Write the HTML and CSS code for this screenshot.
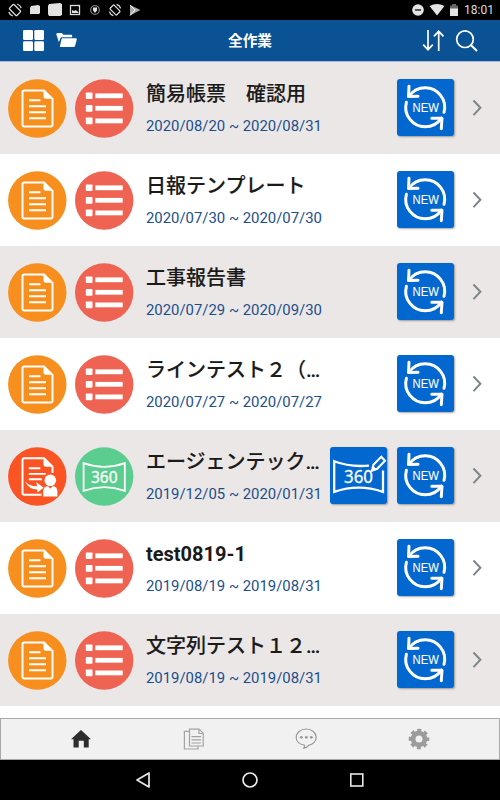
FILE: index.html
```html
<!DOCTYPE html>
<html lang="ja">
	<head>
		<meta charset="UTF-8">
		<title>全作業</title>
		<link rel="stylesheet" href="styles.css">
	</head>
	<body>
		<!-- icons shared by the rows -->
		<svg class="defs">
			<symbol id="doc" viewBox="0 0 59 59">
				<circle cx="29.3" cy="29.5" r="29.2" fill="#f78f1e"/>
				<path d="M36 11.5H16.2q-1.7 0-1.7 1.7v32.6q0 1.7 1.7 1.7h26.6q1.7 0 1.7-1.7V19.8Z" fill="none" stroke="#fff" stroke-width="2"/>
				<path d="M35.5 10.7v6.5q0 2.5 2.5 2.5h7.4Z" fill="#fff"/>
				<path d="M21 21.3h11.5M21 27.3h17M21 33.3h17M21 39.3h17" stroke="#fff" stroke-width="2"/>
			</symbol>
			<symbol id="list" viewBox="0 0 59 59">
				<circle cx="29.2" cy="29.5" r="29.2" fill="#ee6352"/>
				<g fill="#fff">
					<rect x="10.8" y="13.4" width="6.7" height="6.7" rx=".8"/>
					<rect x="10.8" y="26" width="6.7" height="6.7" rx=".8"/>
					<rect x="10.8" y="38.5" width="6.7" height="6.7" rx=".8"/>
					<rect x="20.3" y="14.4" width="27.4" height="4.8"/>
					<rect x="20.3" y="26.9" width="27.4" height="4.8"/>
					<rect x="20.3" y="39.5" width="27.4" height="4.8"/>
				</g>
			</symbol>
			<symbol id="send" viewBox="0 0 59 59">
				<circle cx="29.3" cy="29.5" r="29.2" fill="#fa5424"/>
				<path d="M33.5 47.7H16.2q-1.7 0-1.7-1.7V13q0-1.7 1.7-1.7H36l8.5 8.4V26" fill="none" stroke="#fff" stroke-width="2"/>
				<path d="M35.5 10.8v6.5q0 2.5 2.5 2.5h7.2Z" fill="#fff"/>
				<path d="M20.8 21.3h11.5M20.8 26.9h17M20.8 32.3h13" stroke="#fff" stroke-width="1.9"/>
				<path d="M17 34.5q5.5 5.3 12 4.7l-.6-4 7.2 5.5-6.2 4.8-.2-3Q21 42.5 17 34.5Z" fill="#fff"/>
				<circle cx="42.3" cy="33.3" r="5.8" fill="#fff"/>
				<path d="M35.2 49.5v-5q0-5.2 5-5.2l2.1 2.4 2.1-2.4q5 0 5 5.2v5Z" fill="#fff"/>
			</symbol>
			<symbol id="pano" viewBox="0 0 59 59">
				<circle cx="29.2" cy="29.5" r="29.2" fill="#5acd8f"/>
				<path d="M8.6 16.2q20.6 7.4 41.2 0v27.6q-20.6-7.2-41.2 0Z" fill="none" stroke="#fff" stroke-width="1.8"/>
				<text class="num" x="16" y="35.8" font-size="16.2" textLength="26.6" lengthAdjust="spacingAndGlyphs">360</text>
			</symbol>
			<symbol id="new" viewBox="0 0 57 57">
				<g fill="none" stroke="#fff" stroke-width="3" stroke-linecap="round" stroke-linejoin="round">
					<path d="M12.1 17.3A19.5 19.5 0 0 1 28.2 8.8A19.5 19.5 0 0 1 47 33.3"/>
					<path d="M9.4 23.3A19.5 19.5 0 0 0 28.2 47.8A19.5 19.5 0 0 0 44.4 39.2"/>
					<path d="M12 7.3l-.5 10.2 9.5-.2M34.8 39.2H45l-.7 10.5"/>
				</g>
				<text class="new-text" x="15.6" y="33.2" font-size="12.4" textLength="26.2" lengthAdjust="spacingAndGlyphs">NEW</text>
			</symbol>
			<symbol id="pano-edit" viewBox="0 0 57 57">
				<path d="M39 18.6Q20 20.4 4.2 14.3v30.6q24.4-8.4 48.8 0V23.5" fill="none" stroke="#fff" stroke-width="2.3"/>
				<text class="num" x="14" y="36.2" font-size="18.2" textLength="29" lengthAdjust="spacingAndGlyphs">360</text>
				<path d="M42 23.7l1.4-5.9 7.9-8 3.7 3.9-7.8 8.1Z" fill="none" stroke="#fff" stroke-width="2.1"/>
				<path d="M41.2 24.5l1.6-6 4.4 4.2Z" fill="#fff"/>
			</symbol>
			<symbol id="arrow" viewBox="0 0 10 18">
				<path d="M1.5 1.5L8.4 8.8l-6.9 7.3" fill="none" stroke="#7b8789" stroke-width="2"/>
			</symbol>
		</svg>

		<div class="status">
			<svg class="status-left" width="150" height="20">
				<g fill="none" stroke="#ddd" stroke-width="1.3">
					<rect x="11.8" y="4.8" width="6.4" height="10.4" rx="1" transform="rotate(-45 15 10)"/>
					<path d="M8.8 12a6.5 6.5 0 0 0 4 4M21.2 8a6.5 6.5 0 0 0-4-4"/>
					<rect x="70.5" y="5.5" width="9" height="9"/>
					<circle cx="95" cy="10" r="4.3" stroke="#777"/>
					<rect x="112.2" y="5.3" width="5.6" height="9.4" rx="1" transform="rotate(-45 115 10)"/>
					<path d="M109.4 11.6a5.8 5.8 0 0 0 4 4M120.6 8.4a5.8 5.8 0 0 0-4-4"/>
				</g>
				<g fill="#e2e2e2">
					<path d="M31 6l7-1 2 1v7l-1 1h-9V8Z"/>
					<path d="M49 4l11-1 2 1v11l-2 1H49l-1-2V6Z"/>
					<path d="M72 13v-3l2 1 2-1 3 3ZM93 7.5h4v3l-2 2.5-2-2.5Z"/>
					<path d="M130 5l10.5 5-10.5 5.5Z" opacity=".75"/>
				</g>
				<path d="M130 5l5 5-5 5.5" fill="none" stroke="#fff"/>
			</svg>
			<svg class="status-right" width="50" height="20">
				<circle cx="6" cy="10" r="5.8" fill="#e4e4e4"/>
				<path d="M3 10h6" stroke="#333" stroke-width="1.6"/>
				<path d="M17.5 6q7.5-4 15 0L25 15.5Z" fill="#e4e4e4"/>
				<path d="M38 5.5h2V4h4v1.5h2V9h-8Z" fill="#666"/>
				<path d="M38 8.5h8V16h-8Z" fill="#e4e4e4"/>
			</svg>
			<span class="clock">18:01</span>
		</div>

		<div class="header">
			<svg width="55" height="24">
				<g fill="#fff">
					<rect x="0" y="1" width="10" height="10" rx="1.3"/>
					<rect x="11.3" y="1" width="9.7" height="10" rx="1.3"/>
					<rect x="0" y="12.3" width="10" height="9.7" rx="1.3"/>
					<rect x="11.3" y="12.3" width="9.7" height="9.7" rx="1.3"/>
					<path d="M33.3 5.2q0-1.2 1.2-1.2h4.2l1.8 1.8h7.5q1.2 0 1.2 1.4v1H39q-1.2 0-1.6 1l-1.5 4Z"/>
					<path d="M39.5 9.2h13.3q1.3 0 1 1.2l-1.7 6.3q-.3 1.3-1.6 1.3H37.6q-1 0-.6-1.1l1.5-6.7q.2-1 1-1Z"/>
				</g>
			</svg>
			<h1>全作業</h1>
			<svg width="56" height="24">
				<g fill="none" stroke="#fff" stroke-width="1.7">
					<path d="M6 1v19.5M1.2 15.7l4.8 5 4.8-5M16.7 22V2.4M11.9 7.3l4.8-5 4.8 5"/>
					<circle cx="43" cy="10.2" r="8.3"/>
					<path d="M48.8 16l6.2 6" stroke-width="2"/>
				</g>
			</svg>
		</div>

		<ul class="list">
			<li>
				<svg class="round"><use href="#doc"/></svg>
				<svg class="round"><use href="#list"/></svg>
				<div class="text"><h2>簡易帳票　確認用</h2><p>2020/08/20 ~ 2020/08/31</p></div>
				<div class="buttons"><svg class="btn"><use href="#new"/></svg></div>
				<svg class="arrow"><use href="#arrow"/></svg>
			</li>
			<li>
				<svg class="round"><use href="#doc"/></svg>
				<svg class="round"><use href="#list"/></svg>
				<div class="text"><h2>日報テンプレート</h2><p>2020/07/30 ~ 2020/07/30</p></div>
				<div class="buttons"><svg class="btn"><use href="#new"/></svg></div>
				<svg class="arrow"><use href="#arrow"/></svg>
			</li>
			<li>
				<svg class="round"><use href="#doc"/></svg>
				<svg class="round"><use href="#list"/></svg>
				<div class="text"><h2>工事報告書</h2><p>2020/07/29 ~ 2020/09/30</p></div>
				<div class="buttons"><svg class="btn"><use href="#new"/></svg></div>
				<svg class="arrow"><use href="#arrow"/></svg>
			</li>
			<li>
				<svg class="round"><use href="#doc"/></svg>
				<svg class="round"><use href="#list"/></svg>
				<div class="text"><h2>ラインテスト２（…</h2><p>2020/07/27 ~ 2020/07/27</p></div>
				<div class="buttons"><svg class="btn"><use href="#new"/></svg></div>
				<svg class="arrow"><use href="#arrow"/></svg>
			</li>
			<li>
				<svg class="round"><use href="#send"/></svg>
				<svg class="round"><use href="#pano"/></svg>
				<div class="text"><h2>エージェンテック…</h2><p>2019/12/05 ~ 2020/01/31</p></div>
				<div class="buttons"><svg class="btn"><use href="#pano-edit"/></svg><svg class="btn"><use href="#new"/></svg></div>
				<svg class="arrow"><use href="#arrow"/></svg>
			</li>
			<li>
				<svg class="round"><use href="#doc"/></svg>
				<svg class="round"><use href="#list"/></svg>
				<div class="text"><h2 class="latin">test0819-1</h2><p>2019/08/19 ~ 2019/08/31</p></div>
				<div class="buttons"><svg class="btn"><use href="#new"/></svg></div>
				<svg class="arrow"><use href="#arrow"/></svg>
			</li>
			<li>
				<svg class="round"><use href="#doc"/></svg>
				<svg class="round"><use href="#list"/></svg>
				<div class="text"><h2>文字列テスト１２…</h2><p>2019/08/19 ~ 2019/08/31</p></div>
				<div class="buttons"><svg class="btn"><use href="#new"/></svg></div>
				<svg class="arrow"><use href="#arrow"/></svg>
			</li>
		</ul>

		<div class="tabs">
			<svg width="24" height="24" viewBox="0 0 24 24">
				<path d="M12 3L22 12.2h-2.3v8.3h-4.9v-6.7H9.7v6.7H4.5v-8.3H2Z" fill="#2d2d2d"/>
			</svg>
			<svg width="24" height="24" viewBox="0 0 24 24">
				<g fill="none" stroke="#a3a3a3" stroke-width="1.2">
					<path d="M7 4.3H2.4v17.7H16V19.2"/>
					<path d="M7.5 2.2h9.7l4 4v12.8H7.5Z"/>
					<path d="M17 2.3v4.2h4M9.5 9.6h9.500M9.500 12.8h9.500M9.500 16h9.500"/>
				</g>
			</svg>
			<svg width="24" height="24" viewBox="0 0 24 24">
				<path d="M10.2 18C5 17.5 2.2 14.2 2.2 10.5c0-4.8 4.5-8.5 10-8.5s10 3.7 10 8.2-3.7 7.4-7.3 7.9q-2 2.5-5 3.1 1-1.5.3-3.2Z" fill="none" stroke="#999" stroke-width="1.2"/>
				<g fill="#999"><circle cx="7.3" cy="10.3" r="1.4"/><circle cx="12.3" cy="10.3" r="1.4"/><circle cx="17.3" cy="10.3" r="1.4"/></g>
			</svg>
			<svg width="24" height="24" viewBox="0 0 24 24">
				<circle cx="12" cy="12" r="5.9" fill="none" stroke="#9c9c9c" stroke-width="4.8"/>
				<circle cx="12" cy="12" r="8.7" fill="none" stroke="#9c9c9c" stroke-width="3.2" stroke-dasharray="3.9 2.933" stroke-dashoffset="1.95"/>
			</svg>
		</div>

		<div class="nav">
			<svg width="16" height="18"><path d="M14 2v14L2 9Z" fill="none" stroke="#e8e8e8" stroke-width="1.7" stroke-linejoin="round"/></svg>
			<svg width="16" height="18"><circle cx="8" cy="9" r="7" fill="none" stroke="#e8e8e8" stroke-width="1.7"/></svg>
			<svg width="16" height="18"><rect x="1.8" y="3" width="12" height="12" fill="none" stroke="#e8e8e8" stroke-width="1.6"/></svg>
		</div>
	</body>
</html>
```
FILE: styles.css
```css
*{
	padding: 0;
	margin: 0;
	box-sizing: border-box;
}
body{
	width: 500px;
	height: 800px;
	overflow: hidden;
	background: #fff;
	font-family: Roboto, "Noto Sans CJK JP", sans-serif;
	display: flex;
	flex-direction: column;
}
svg{
	display: block;
	flex: none;
}
.defs{
	display: none;
}
.status{
	height: 20px;
	background: #000;
	display: flex;
	align-items: center;
	flex: none;
}
.status-right{
	margin-left: auto;
}
.clock{
	width: 38px;
	padding-left: 2px;
	color: #ddd;
	font-size: 12px;
	line-height: 20px;
}
.header{
	height: 42px;
	padding: 0 22px 0 23px;
	background: #0a5294;
	border-bottom: 1px solid #a9bdd6;
	display: flex;
	align-items: center;
	justify-content: space-between;
	flex: none;
}
.header h1{
	color: #fff;
	font-size: 14.7px;
	font-weight: bold;
	line-height: 20px;
}
.list{
	height: 656px;
	list-style: none;
	overflow: hidden;
}
.list li{
	height: 92px;
	padding-left: 8px;
	display: flex;
	align-items: center;
}
.list li:nth-child(odd){
	background: #ebe7e6;
}
.round{
	width: 59px;
	height: 59px;
	margin-right: 8px;
}
.text{
	width: 178px;
	padding: 0 0 2px 4px;
	white-space: nowrap;
}
.text h2{
	color: #1a1a1a;
	font-size: 20px;
	font-weight: 500;
	line-height: 32px;
	-webkit-text-stroke: .12px #1a1a1a;
}
.text .latin{
	font-weight: bold;
	-webkit-text-stroke: 0;
}
.text p{
	color: #1b4f8c;
	font-size: 14.9px;
	line-height: 20px;
	margin-top: 6px;
}
.buttons{
	width: 134px;
	padding-bottom: 1px;
	display: flex;
	justify-content: flex-end;
	gap: 10px;
}
.btn{
	width: 57px;
	height: 57px;
	border-radius: 3px;
	background: #0267cf;
	box-shadow: 1px 1px 2px rgba(0, 0, 0, .35);
}
.arrow{
	width: 10px;
	height: 18px;
	margin-left: 18px;
}
.num{
	fill: #fff;
	stroke: #fff;
	stroke-width: .3px;
	font-family: "Noto Sans", sans-serif;
}
.new-text{
	fill: #fff;
	stroke: #fff;
	stroke-width: .1px;
	font-family: "Liberation Sans", sans-serif;
}
.tabs{
	height: 42px;
	padding: 0 24px;
	background: #f1f1f1;
	border: 1px solid #a8a8a8;
	display: flex;
	align-items: center;
	justify-content: space-around;
	flex: none;
}
.nav{
	height: 40px;
	background: #000;
	display: flex;
	align-items: center;
	justify-content: center;
	gap: 91px;
	flex: none;
}
```
